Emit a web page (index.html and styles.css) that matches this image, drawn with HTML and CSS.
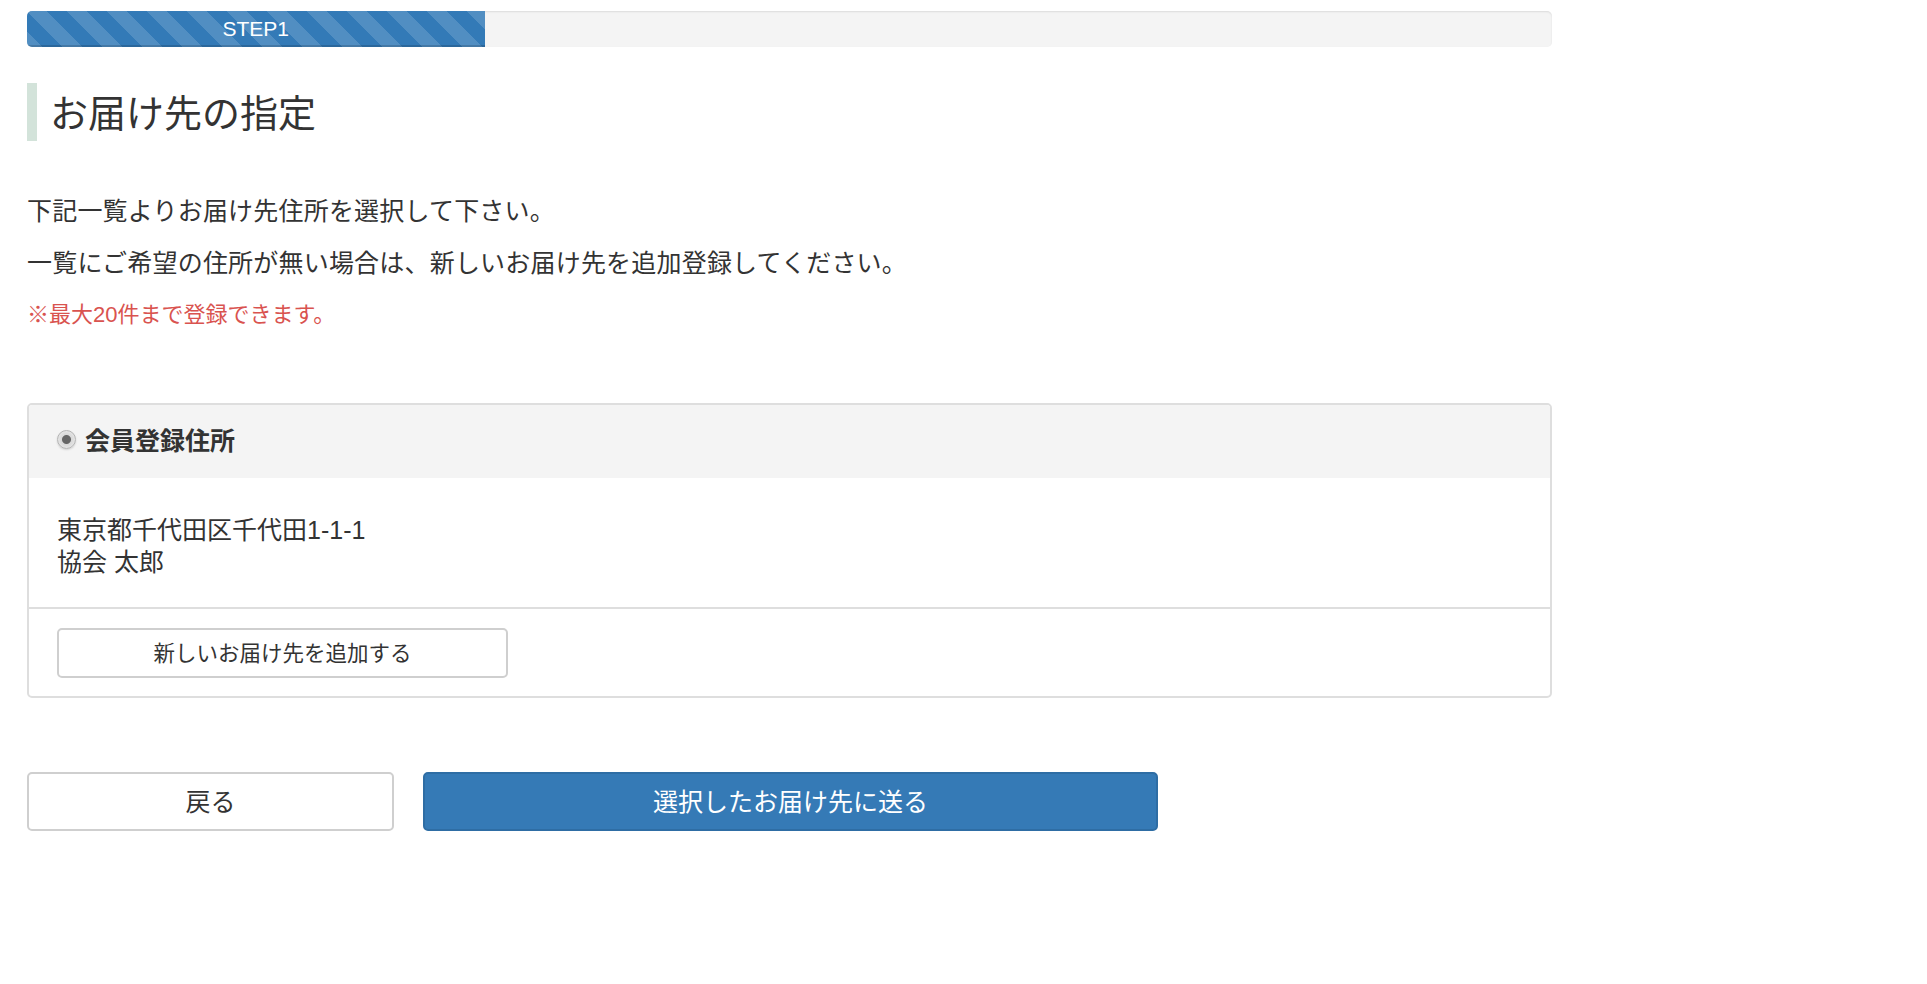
FILE: index.html
```html
<html>
    <head>
        <title>お届け先の指定</title>
        <link rel="stylesheet" href="styles.css">
    </head>
    <body>
        <div class="page">
            <div class="progress">
                <div class="progress-bar" style="width: 30%">STEP1</div>
            </div>

            <h1 class="page-title">お届け先の指定</h1>

            <p class="lead">下記一覧よりお届け先住所を選択して下さい。</p>
            <p class="lead">一覧にご希望の住所が無い場合は、新しいお届け先を追加登録してください。</p>
            <p class="note">※最大20件まで登録できます。</p>

            <div class="address-card">
                <label class="address-head">
                    <input type="radio" name="address" class="radio" checked>
                    <span>会員登録住所</span>
                </label>
                <div class="address-body">
                    東京都千代田区千代田1-1-1<br>
                    協会 太郎
                </div>
                <div class="address-foot">
                    <button class="btn btn-add">新しいお届け先を追加する</button>
                </div>
            </div>

            <div class="actions">
                <button class="btn btn-back">戻る</button>
                <button class="btn btn-primary">選択したお届け先に送る</button>
            </div>
        </div>
    </body>
</html>
```

FILE: styles.css
```css
body {
    margin: 0;
    color: #333;
    font-family: "Liberation Sans", "Noto Sans CJK JP", sans-serif;
    background: #fff;
}
.page {
    width: 1525px;
    padding: 11px 0 40px 27px;
}

/* progress */
.progress {
    height: 36px;
    background: #f4f4f4;
    border-radius: 5px;
    box-shadow: inset 0 1px 2px rgba(0, 0, 0, .1);
    overflow: hidden;
}
.progress-bar {
    height: 100%;
    background-color: #337ab7;
    background-image: linear-gradient(45deg, rgba(255, 255, 255, .15) 25%, transparent 25%, transparent 50%, rgba(255, 255, 255, .15) 50%, rgba(255, 255, 255, .15) 75%, transparent 75%, transparent);
    background-size: 40px 40px;
    box-shadow: inset 0 -2px 0 rgba(0, 0, 0, .15);
    color: #fff;
    font-size: 21px;
    line-height: 36px;
    text-align: center;
}

/* heading */
.page-title {
    margin: 36px 0 0;
    height: 54px;
    padding-top: 4px;
    line-height: 54px;
    border-left: 10px solid #d3e3da;
    padding-left: 13px;
    font-size: 38px;
    font-weight: normal;
}

.lead, .note {
    margin: 0;
    line-height: 52px;
}
.lead {
    font-size: 25px;
    letter-spacing: 0.2px;
}
.lead:first-of-type {
    margin-top: 44px;
}
.note {
    font-size: 22px;
    color: #d9534f;
}

/* address card */
.address-card {
    margin-top: 62px;
    border: 2px solid #dedede;
    border-radius: 5px;
    overflow: hidden;
}
.address-head {
    display: flex;
    align-items: center;
    gap: 9px;
    height: 36px;
    padding: 16px 28px 21px;
    background: #f4f4f4;
    font-size: 25px;
    font-weight: bold;
}
.radio {
    appearance: none;
    -webkit-appearance: none;
    margin: 0;
    width: 19px;
    height: 19px;
    border-radius: 50%;
    border: 1px solid #b4b4b4;
    background: radial-gradient(circle, #666 0 4px, #d8d8d8 5px, #f2f2f2 100%);
    box-shadow: 0 1px 2px rgba(0, 0, 0, .15);
}
.address-body {
    padding: 36px 28px 29px;
    font-size: 25px;
    line-height: 32px;
    border-bottom: 2px solid #dedede;
}
.address-foot {
    padding: 19px 28px 18px;
}

/* buttons */
.btn {
    font-family: inherit;
    color: #333;
    background: #fff;
    border: 2px solid #cfcfcf;
    border-radius: 5px;
    padding: 0 0 3px;
    cursor: pointer;
}
.btn-add {
    width: 451px;
    height: 50px;
    font-size: 21.5px;
}
.actions {
    display: flex;
    gap: 29px;
    margin-top: 74px;
}
.btn-back {
    width: 367px;
    height: 59px;
    font-size: 25px;
}
.btn-primary {
    width: 735px;
    height: 59px;
    font-size: 25px;
    color: #fff;
    background: #357ab6;
    border-color: #2e6da4;
}
```
